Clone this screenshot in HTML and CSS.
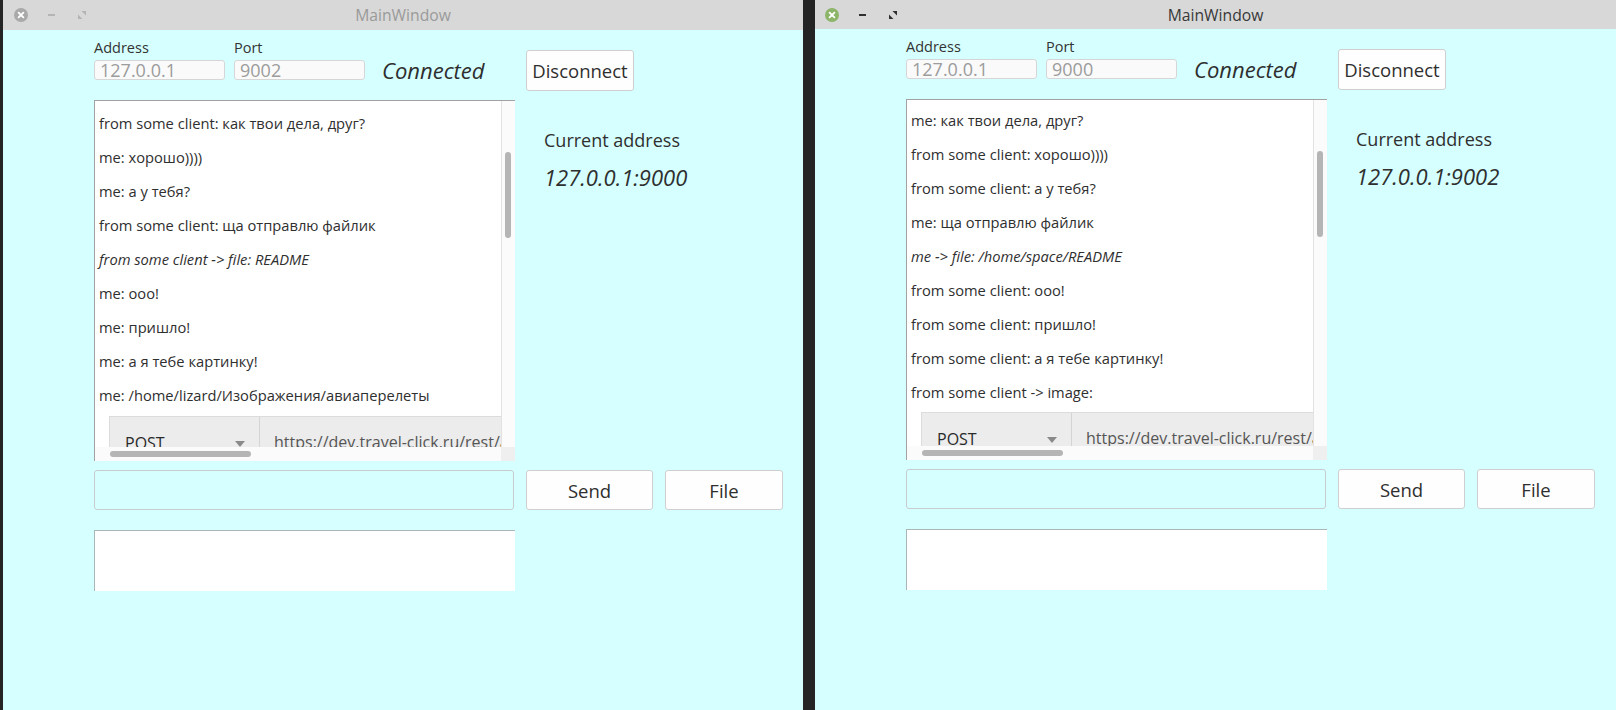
FILE: index.html
```html
<!DOCTYPE html>
<html lang="ru">
<head>
<meta charset="utf-8">
<title>MainWindow</title>
<link rel="stylesheet" href="styles.css">
</head>
<body>
<div class="screen">
  <div class="window inactive">
    <div class="titlebar">
      <div class="controls">
        <svg class="ctl-close" width="14" height="14" viewBox="0 0 14 14"><circle cx="7" cy="7" r="7" class="close-bg"/><path d="M4.6 4.6 L9.4 9.4 M9.4 4.6 L4.6 9.4" stroke="#fff" stroke-width="1.8" stroke-linecap="round"/></svg>
        <span class="ctl-min"></span>
        <svg class="ctl-max" width="8" height="8" viewBox="0 0 8 8"><path class="max-shape" d="M3.5 0 H8 V4.5 Z M0 3.5 V8 H4.5 Z"/></svg>
      </div>
      <div class="title">MainWindow</div>
      <div></div>
    </div>
    <div class="content">
      <div class="top">
        <div class="field"><div class="label">Address</div><div class="input">127.0.0.1</div></div>
        <div class="field"><div class="label">Port</div><div class="input">9002</div></div>
        <div class="connected">Connected</div>
        <div class="btn disconnect">Disconnect</div>
      </div>
      <div class="middle">
        <div class="chat">
          <div class="viewport">
            <div class="messages">
              <div class="msg">from some client: как твои дела, друг?</div>
              <div class="msg">me: хорошо))))</div>
              <div class="msg">me: а у тебя?</div>
              <div class="msg">from some client: ща отправлю файлик</div>
              <div class="msg file">from some client -&gt; file: README</div>
              <div class="msg">me: ooo!</div>
              <div class="msg">me: пришло!</div>
              <div class="msg">me: а я тебе картинку!</div>
              <div class="msg">me: /home/lizard/Изображения/авиаперелеты</div>
              <div class="attachment">
                <div class="method"><span>POST</span><svg class="caret" width="10" height="6" viewBox="0 0 10 6"><path d="M0 0 H10 L5 6 Z" fill="#8a8a8a"/></svg></div>
                <div class="url">https://dev.travel-click.ru/rest/api/v1/avia/search</div>
              </div>
            </div>
          </div>
          <div class="vscroll"><div class="vthumb"></div></div>
          <div class="hscroll"><div class="hthumb"></div></div>
          <div class="corner"></div>
        </div>
        <div class="info">
          <div class="info-label">Current address</div>
          <div class="info-value">127.0.0.1:9000</div>
        </div>
      </div>
      <div class="compose">
        <div class="msg-input"></div>
        <div class="btn send">Send</div>
        <div class="btn file-btn">File</div>
      </div>
      <div class="preview"></div>
    </div>
  </div>

  <div class="window active right">
    <div class="titlebar">
      <div class="controls">
        <svg class="ctl-close" width="14" height="14" viewBox="0 0 14 14"><circle cx="7" cy="7" r="7" class="close-bg"/><path d="M4.6 4.6 L9.4 9.4 M9.4 4.6 L4.6 9.4" stroke="#fff" stroke-width="1.8" stroke-linecap="round"/></svg>
        <span class="ctl-min"></span>
        <svg class="ctl-max" width="8" height="8" viewBox="0 0 8 8"><path class="max-shape" d="M3.5 0 H8 V4.5 Z M0 3.5 V8 H4.5 Z"/></svg>
      </div>
      <div class="title">MainWindow</div>
      <div></div>
    </div>
    <div class="content">
      <div class="top">
        <div class="field"><div class="label">Address</div><div class="input">127.0.0.1</div></div>
        <div class="field"><div class="label">Port</div><div class="input">9000</div></div>
        <div class="connected">Connected</div>
        <div class="btn disconnect">Disconnect</div>
      </div>
      <div class="middle">
        <div class="chat">
          <div class="viewport">
            <div class="messages">
              <div class="msg">me: как твои дела, друг?</div>
              <div class="msg">from some client: хорошо))))</div>
              <div class="msg">from some client: а у тебя?</div>
              <div class="msg">me: ща отправлю файлик</div>
              <div class="msg file">me -&gt; file: /home/space/README</div>
              <div class="msg">from some client: ooo!</div>
              <div class="msg">from some client: пришло!</div>
              <div class="msg">from some client: а я тебе картинку!</div>
              <div class="msg">from some client -&gt; image:</div>
              <div class="attachment">
                <div class="method"><span>POST</span><svg class="caret" width="10" height="6" viewBox="0 0 10 6"><path d="M0 0 H10 L5 6 Z" fill="#8a8a8a"/></svg></div>
                <div class="url">https://dev.travel-click.ru/rest/api/v1/avia/search</div>
              </div>
            </div>
          </div>
          <div class="vscroll"><div class="vthumb"></div></div>
          <div class="hscroll"><div class="hthumb"></div></div>
          <div class="corner"></div>
        </div>
        <div class="info">
          <div class="info-label">Current address</div>
          <div class="info-value">127.0.0.1:9002</div>
        </div>
      </div>
      <div class="compose">
        <div class="msg-input"></div>
        <div class="btn send">Send</div>
        <div class="btn file-btn">File</div>
      </div>
      <div class="preview"></div>
    </div>
  </div>
</div>
</body>
</html>
```

FILE: styles.css
```css
html, body {
  margin: 0;
  padding: 0;
}
body {
  width: 1616px;
  height: 710px;
  overflow: hidden;
  background: #242424;
  font-family: "Open Sans", "Noto Sans", "DejaVu Sans", sans-serif;
  color: #333;
}
.screen {
  display: flex;
  gap: 12px;
  padding-left: 3px;
  height: 710px;
}
.window {
  width: 800px;
  height: 710px;
  background: #d6ffff;
  display: flex;
  flex-direction: column;
  overflow: hidden;
}
.window.right {
  width: 801px;
}
.titlebar {
  height: 30px;
  flex: none;
  background: #d8d8d8;
  display: grid;
  grid-template-columns: 1fr auto 1fr;
  align-items: center;
}
.right .titlebar {
  height: 29px;
}
.controls {
  display: flex;
  align-items: center;
  padding-left: 11px;
}
.right .controls {
  padding-left: 10px;
}
.close-bg { fill: #a9a9a9; }
.active .close-bg { fill: #8cb56a; }
.ctl-min {
  width: 7px;
  height: 2px;
  margin-left: 20px;
  background: #b4b4b4;
}
.active .ctl-min { background: #2f2f2f; }
.ctl-max {
  margin-left: 23px;
}
.max-shape { fill: #b4b4b4; }
.active .max-shape { fill: #2f2f2f; }
.title {
  font-size: 15.7px;
  color: #9a9a9a;
}
.active .title { color: #383838; }

.content {
  padding: 9px 0 0 91px;
}
.top {
  display: flex;
  align-items: flex-start;
  height: 52px;
}
.field {
  display: flex;
  flex-direction: column;
  width: 131px;
  margin-right: 9px;
}
.field + .field {
  margin-right: 0;
}
.label {
  font-size: 14.5px;
  line-height: 18px;
  height: 18px;
  margin-bottom: 3px;
  color: #333;
}
.input {
  height: 20px;
  box-sizing: border-box;
  border: 1px solid #d6d6d6;
  border-radius: 3px;
  background: #fafafa;
  font-size: 18px;
  line-height: 18px;
  color: #9c9c9c;
  padding-left: 5px;
  white-space: nowrap;
}
.connected {
  margin: 21px 0 0 17px;
  width: 144px;
  font-style: italic;
  font-size: 22px;
  line-height: 20px;
  color: #2e2e2e;
}
.btn {
  box-sizing: border-box;
  background: #fefefe;
  border: 1px solid #cfcfcf;
  border-radius: 3px;
  display: flex;
  align-items: center;
  justify-content: center;
  font-size: 18.5px;
  color: #2f2f2f;
}
.disconnect {
  margin-top: 11px;
  width: 108px;
  height: 41px;
}
.middle {
  display: flex;
  margin-top: 9px;
}
.chat {
  width: 421px;
  height: 361px;
  box-sizing: border-box;
  border-left: 1px solid #a2a2a2;
  border-top: 1px solid #a2a2a2;
  background: #fff;
  display: grid;
  grid-template-columns: 1fr 14px;
  grid-template-rows: 1fr 14px;
}
.viewport {
  overflow: hidden;
  min-width: 0;
}
.messages {
  padding: 5px 0 0 4px;
}
.right .messages {
  padding-top: 3px;
}
.msg {
  height: 34px;
  line-height: 34px;
  font-size: 14.7px;
  color: #2f2f2f;
  white-space: nowrap;
}
.msg.file {
  font-style: italic;
}
.attachment {
  margin: 4px 0 0 10px;
  width: 460px;
  height: 60px;
  background: #ececec;
  border-top: 1px solid #dcdcdc;
  border-left: 1px solid #dcdcdc;
  display: flex;
}
.right .attachment {
  margin-top: 3px;
}
.method {
  width: 150px;
  flex: none;
  box-sizing: border-box;
  border-right: 1px solid #d4d4d4;
  display: flex;
  align-items: flex-start;
  padding: 16px 0 0 15px;
  font-size: 16px;
  line-height: 20px;
  color: #2a2a2a;
}
.caret {
  margin: 8px 0 0 auto;
  margin-right: 14px;
}
.url {
  padding: 15px 0 0 14px;
  font-size: 16px;
  line-height: 20px;
  color: #555;
  white-space: nowrap;
}
.vscroll {
  background: #fbfbfb;
  border-left: 1px solid #e2e2e2;
}
.vthumb {
  width: 6px;
  height: 86px;
  margin: 51px 0 0 3px;
  border-radius: 3px;
  background: #b5b5b5;
}
.hscroll {
  background: #fbfbfb;
}
.hthumb {
  width: 141px;
  height: 6px;
  margin: 4px 0 0 15px;
  border-radius: 3px;
  background: #b5b5b5;
}
.corner {
  background: #efefef;
}
.info {
  margin-left: 29px;
  padding-top: 29px;
}
.info-label {
  font-size: 18px;
  line-height: 22px;
  color: #2f2f2f;
}
.info-value {
  margin-top: 13px;
  font-size: 22px;
  line-height: 26px;
  font-style: italic;
  color: #2f2f2f;
}
.compose {
  display: flex;
  gap: 12px;
  margin-top: 9px;
}
.msg-input {
  width: 420px;
  height: 40px;
  box-sizing: border-box;
  border: 1px solid #c9cccc;
  border-radius: 3px;
}
.send {
  width: 127px;
  height: 40px;
}
.file-btn {
  width: 118px;
  height: 40px;
}
.preview {
  margin-top: 20px;
  width: 421px;
  height: 61px;
  box-sizing: border-box;
  background: #fff;
  border-left: 1px solid #a8b6b6;
  border-top: 1px solid #a8b6b6;
}
```
